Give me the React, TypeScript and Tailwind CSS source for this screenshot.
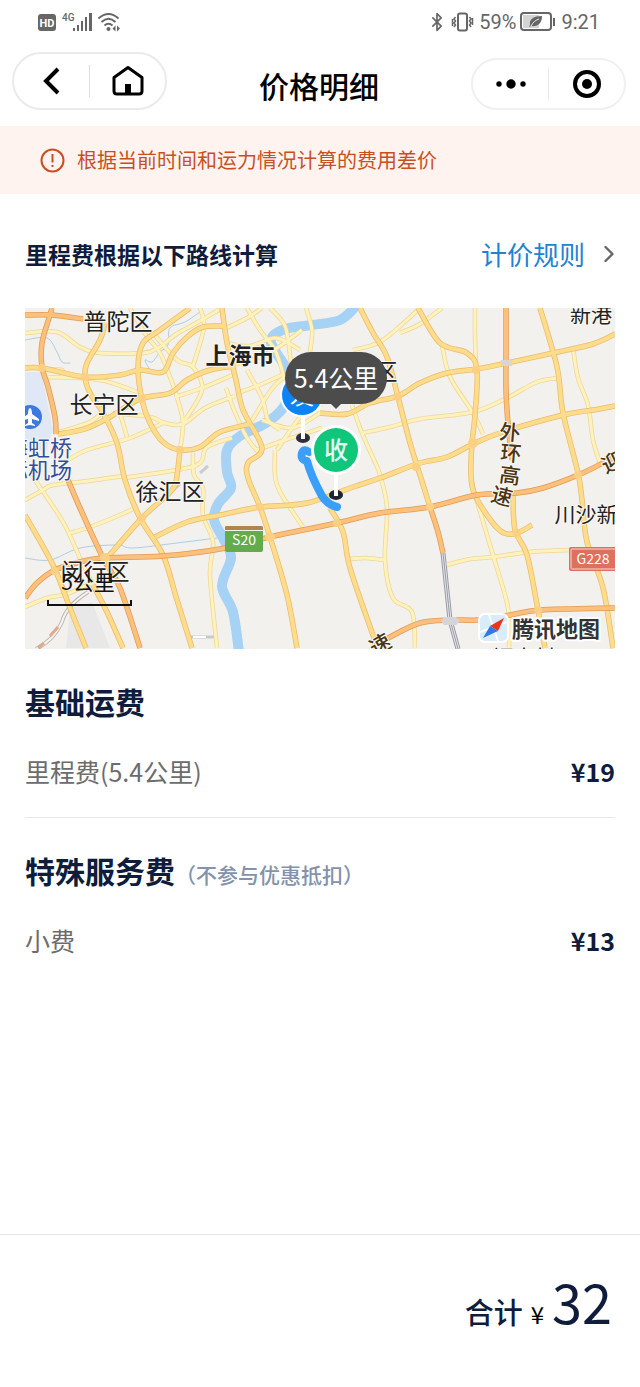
import React from "react";
import { Bluetooth, ChevronRight } from "lucide-react";

type RoadKind = "minor" | "major" | "highway";

interface IRoad {
  kind: RoadKind;
  points: number[][];
}

interface IFee {
  name: string;
  price: number;
}

interface ILabel {
  text: string;
  x: number;
  y: number;
  size: number;
  color: string;
  rotate?: number;
  weight?: number;
}

const roadStyle = {
  minor: { line: "#fff2bd", edge: "#efd694", width: 3 },
  major: { line: "#fddc8b", edge: "#ebbb6a", width: 4 },
  highway: { line: "#fbc07c", edge: "#e39a50", width: 4 },
};

const roads: IRoad[] = [
  { kind: "minor", points: [[25, 333], [57, 332], [80, 347], [100, 353], [143, 353], [160, 347], [175, 335], [198, 322], [222, 308]] },
  { kind: "minor", points: [[130, 308], [146, 335], [160, 353], [170, 377], [177, 397], [183, 423], [180, 450]] },
  { kind: "minor", points: [[153, 333], [177, 360], [193, 367], [202, 390], [183, 423]] },
  { kind: "minor", points: [[48, 377], [100, 380], [140, 393]] },
  { kind: "minor", points: [[48, 370], [62, 370], [62, 378]] },
  { kind: "minor", points: [[113, 413], [150, 417], [165, 423], [183, 424], [205, 408], [235, 396]] },
  { kind: "minor", points: [[63, 463], [87, 450], [130, 438], [163, 423]] },
  { kind: "minor", points: [[120, 413], [127, 437]] },
  { kind: "minor", points: [[56, 433], [90, 422], [104, 410]] },
  { kind: "minor", points: [[123, 478], [177, 470], [200, 463], [207, 447], [232, 438]] },
  { kind: "minor", points: [[193, 453], [194, 475], [203, 488], [203, 515], [213, 542], [210, 575], [217, 648]] },
  { kind: "minor", points: [[175, 397], [202, 388], [235, 374]] },
  { kind: "minor", points: [[25, 500], [43, 490], [53, 485], [88, 481], [123, 476]] },
  { kind: "minor", points: [[30, 473], [37, 483], [63, 522], [80, 558], [93, 585]] },
  { kind: "minor", points: [[70, 533], [90, 527], [120, 515], [137, 507]] },
  { kind: "minor", points: [[25, 607], [47, 598], [67, 594], [93, 582]] },
  { kind: "minor", points: [[200, 308], [204, 327], [193, 366]] },
  { kind: "minor", points: [[222, 330], [247, 318], [262, 308]] },
  { kind: "minor", points: [[247, 308], [260, 330], [275, 350], [284, 377]] },
  { kind: "minor", points: [[270, 308], [285, 326], [290, 355], [292, 372]] },
  { kind: "minor", points: [[306, 308], [312, 330], [310, 352]] },
  { kind: "minor", points: [[227, 343], [250, 346], [276, 338], [300, 350]] },
  { kind: "minor", points: [[225, 366], [252, 360], [274, 350], [302, 330]] },
  { kind: "minor", points: [[240, 392], [262, 384], [284, 374]] },
  { kind: "minor", points: [[247, 370], [262, 398], [268, 420], [280, 430]] },
  { kind: "minor", points: [[250, 424], [262, 404], [276, 384], [300, 366]] },
  { kind: "minor", points: [[258, 452], [246, 436], [234, 410], [226, 388]] },
  { kind: "minor", points: [[277, 450], [292, 428], [308, 408], [322, 404]] },
  { kind: "minor", points: [[257, 450], [285, 440], [322, 428]] },
  { kind: "minor", points: [[262, 420], [292, 428], [320, 413]] },
  { kind: "minor", points: [[420, 308], [398, 328], [378, 343], [353, 350]] },
  { kind: "minor", points: [[352, 405], [362, 433], [374, 460], [380, 475], [387, 508], [385, 560], [393, 598], [412, 612], [415, 648]] },
  { kind: "minor", points: [[362, 433], [390, 427], [420, 419], [473, 412], [507, 398], [537, 382], [558, 378]] },
  { kind: "minor", points: [[275, 450], [275, 475], [280, 492], [303, 527]] },
  { kind: "minor", points: [[350, 559], [366, 558], [385, 560]] },
  { kind: "minor", points: [[475, 308], [475, 335], [476, 367]] },
  { kind: "minor", points: [[442, 308], [420, 324], [400, 333]] },
  { kind: "minor", points: [[442, 345], [450, 377], [473, 413], [483, 434]] },
  { kind: "minor", points: [[475, 495], [493, 555], [508, 608], [509, 648]] },
  { kind: "minor", points: [[447, 565], [470, 559], [493, 557], [530, 552], [569, 550]] },
  { kind: "minor", points: [[573, 348], [578, 378], [588, 405], [593, 440], [600, 463]] },
  { kind: "major", points: [[25, 368], [42, 368], [85, 377], [120, 375], [140, 370], [163, 372], [173, 353], [187, 337], [203, 327], [225, 326]] },
  { kind: "major", points: [[58, 434], [85, 429], [110, 417], [140, 399], [170, 393], [187, 380], [210, 370], [236, 366]] },
  { kind: "major", points: [[190, 308], [160, 330], [143, 343], [138, 367], [142, 400], [150, 423], [163, 442], [180, 450], [200, 447], [220, 432], [250, 424]] },
  { kind: "major", points: [[105, 323], [100, 340], [87, 363], [85, 377], [90, 393], [103, 413], [117, 443], [125, 480], [140, 518], [163, 555], [177, 600], [192, 648]] },
  { kind: "major", points: [[180, 450], [177, 475], [172, 490], [142, 518], [107, 558]] },
  { kind: "major", points: [[25, 515], [53, 565], [70, 608], [86, 648]] },
  { kind: "major", points: [[93, 585], [107, 612], [123, 648]] },
  { kind: "major", points: [[155, 537], [187, 522], [220, 515], [260, 507], [307, 503], [353, 487], [380, 478], [420, 463], [447, 457], [475, 443], [503, 432], [563, 415], [593, 410], [615, 406]] },
  { kind: "major", points: [[222, 308], [227, 343], [236, 380], [243, 410], [262, 448], [248, 463], [248, 478], [260, 507], [270, 537], [287, 595], [297, 648]] },
  { kind: "major", points: [[360, 308], [373, 333], [387, 357], [398, 397], [410, 443], [420, 475], [430, 507]] },
  { kind: "major", points: [[320, 413], [347, 414], [370, 403], [398, 396], [420, 383], [447, 373], [477, 369], [507, 363], [553, 353], [593, 344], [615, 334]] },
  { kind: "major", points: [[418, 308], [440, 343], [467, 353], [477, 370], [475, 415], [472, 443], [471, 475], [475, 495], [492, 522], [504, 533], [517, 533], [532, 525]] },
  { kind: "major", points: [[540, 308], [557, 367], [563, 413], [578, 473], [582, 500], [587, 542], [603, 588], [613, 648]] },
  { kind: "major", points: [[330, 508], [343, 532], [350, 568], [373, 635], [378, 648]] },
  { kind: "major", points: [[513, 495], [515, 530], [527, 555], [538, 610], [545, 648]] },
  { kind: "highway", points: [[25, 315], [52, 315], [83, 319]] },
  { kind: "highway", points: [[52, 308], [49, 318], [42, 343], [42, 367], [48, 387], [55, 417], [56, 434]] },
  { kind: "highway", points: [[68, 480], [80, 508], [103, 558], [120, 588], [140, 648]] },
  { kind: "highway", points: [[25, 598], [37, 583], [55, 570], [80, 562], [103, 558], [163, 556], [220, 549], [270, 537], [337, 523], [380, 513], [430, 507], [477, 495], [517, 493], [543, 488], [578, 475], [603, 463], [615, 457]] },
  { kind: "highway", points: [[430, 507], [438, 532], [443, 553]] },
  { kind: "highway", points: [[506, 308], [506, 350], [506, 390], [508, 423], [512, 460]] },
  { kind: "highway", points: [[372, 648], [390, 637], [420, 623], [450, 620], [477, 620], [510, 615], [540, 610], [615, 608]] },
];

const river = [[356, 306], [340, 320], [312, 325], [285, 329], [271, 339], [276, 352], [288, 372], [290, 390], [283, 408], [266, 423], [240, 436], [227, 450], [227, 472], [231, 488], [218, 504], [214, 520], [224, 540], [231, 558], [222, 586], [233, 612], [239, 652]];

const streams = [
  [[25, 340], [47, 338], [57, 352], [62, 362], [70, 363]],
  [[200, 312], [185, 322], [170, 328], [168, 345], [160, 352], [152, 362], [145, 360], [150, 370]],
  [[25, 558], [50, 560], [80, 548], [117, 545], [133, 548], [177, 543], [217, 538]],
];

const labels: ILabel[] = [
  { text: "普陀区", x: 118, y: 330, size: 23, color: "#222222" },
  { text: "上海市", x: 240, y: 364, size: 23, color: "#222222", weight: 700 },
  { text: "区", x: 386, y: 380, size: 23, color: "#222222" },
  { text: "长宁区", x: 104, y: 413, size: 23, color: "#222222" },
  { text: "徐汇区", x: 170, y: 500, size: 23, color: "#222222" },
  { text: "闵行区", x: 95, y: 580, size: 23, color: "#222222" },
  { text: "新港", x: 591, y: 322, size: 21, color: "#222222" },
  { text: "川沙新", x: 586, y: 522, size: 21, color: "#222222" },
  { text: "海虹桥", x: 39, y: 456, size: 22, color: "#2f4f9a" },
  { text: "际机场", x: 39, y: 478, size: 22, color: "#2f4f9a" },
  { text: "外", x: 510, y: 440, size: 21, color: "#4b3512", rotate: 5, weight: 500 },
  { text: "环", x: 511, y: 461, size: 21, color: "#4b3512", rotate: 5, weight: 500 },
  { text: "高", x: 510, y: 483, size: 21, color: "#4b3512", rotate: 8, weight: 500 },
  { text: "速", x: 502, y: 504, size: 21, color: "#4b3512", rotate: 15, weight: 500 },
  { text: "迎", x: 612, y: 470, size: 21, color: "#4b3512", rotate: -25, weight: 500 },
  { text: "速", x: 380, y: 652, size: 21, color: "#4b3512", rotate: -30, weight: 500 },
  { text: "福古村", x: 524, y: 665, size: 21, color: "#222222" },
];

const baseFees: IFee[] = [{ name: "里程费(5.4公里)", price: 19 }];
const serviceFees: IFee[] = [{ name: "小费", price: 13 }];

// curve that goes through every point, so that the roads still meet at their junctions
const toPath = (points: number[][]): string => {
  let d = `M${points[0][0]} ${points[0][1]}`;
  for (let i = 0; i < points.length - 1; i++) {
    const p0 = points[i - 1] || points[i];
    const p1 = points[i];
    const p2 = points[i + 1];
    const p3 = points[i + 2] || p2;
    d += `C${p1[0] + (p2[0] - p0[0]) / 6} ${p1[1] + (p2[1] - p0[1]) / 6} ${p2[0] - (p3[0] - p1[0]) / 6} ${p2[1] - (p3[1] - p1[1]) / 6} ${p2[0]} ${p2[1]}`;
  }
  return d;
};

const StatusBar = () => {
  return (
    <div className="flex h-11 items-center justify-between pl-9 pr-10 text-[#666666]">
      <svg width="86" height="22" viewBox="36 11 86 22" fill="currentColor">
        <rect x="38" y="14" width="18" height="17" rx="3" />
        <text x="47" y="27" fontSize="11" fontWeight="700" fill="#fff" textAnchor="middle" fontFamily="Roboto">HD</text>
        <text x="62" y="21" fontSize="10" fontWeight="500" fontFamily="Roboto">4G</text>
        <rect x="73" y="28" width="2" height="3" />
        <rect x="77" y="25" width="2" height="6" />
        <rect x="81" y="21" width="2" height="10" />
        <rect x="85" y="17" width="2" height="14" />
        <rect x="89" y="13" width="3" height="18" />
        <g fill="none" stroke="currentColor" strokeWidth="2">
          <path d="M98.500 18.500 Q108.500 9.500 118.500 18.500" />
          <path d="M101.500 22 Q108.500 15.500 115.500 22" />
          <path d="M104.500 25.500 Q108.500 22 112.500 25.500" />
        </g>
        <circle cx="108.500" cy="29" r="2" />
        <path d="M115.500 25.500v6l-3-3zM117 25.500v6l3-3z" />
      </svg>
      <div className="flex items-center gap-1 font-[Roboto] text-xl">
        <Bluetooth size={20} strokeWidth={2} />
        <svg width="24" height="20" viewBox="0 0 24 20" fill="none" stroke="currentColor" strokeWidth="2">
          <rect x="7" y="1.500" width="9" height="17" rx="2" />
          <path strokeWidth="1.500" d="M4.500 5l-1.500 2 1.500 2-1.500 2 1.500 2-1.500 2M1.500 7v7M18.500 5l1.500 2-1.500 2 1.500 2-1.500 2 1.500 2M21.500 6v7" />
        </svg>
        <span>59%</span>
        <svg width="37" height="20" viewBox="0 0 37 20" fill="none">
          <rect x="1" y="1" width="30" height="17" rx="3" stroke="currentColor" strokeWidth="2" />
          <rect x="3" y="3" width="16" height="13" fill="#d4d4d4" />
          <path d="M22 4c-8 0-13 3-12 9l-1 2 2-1c7 1 11-3 11-10z" fill="currentColor" />
          <path d="M11 14c2-4 5-6 8-7" stroke="#eeeeee" />
          <rect x="33" y="6" width="2" height="8" fill="currentColor" />
        </svg>
        <span>9:21</span>
      </div>
    </div>
  );
};

const NavBar = () => {
  return (
    <header className="grid grid-cols-[1fr_auto_1fr] items-center pb-4 pl-3 pr-3.5 pt-2 text-black">
      <div className="flex h-[58px] w-[155px] items-center rounded-full border-2 border-[#ebebeb]">
        <button type="button" aria-label="返回" className="flex flex-1 justify-center">
          <svg width="28" height="32" viewBox="0 0 28 32" fill="none" stroke="currentColor" strokeWidth="4">
            <path d="M20 4L8 16L20 28" />
          </svg>
        </button>
        <div className="h-8 w-px bg-[#dddddd]" />
        <button type="button" aria-label="首页" className="flex flex-1 justify-center">
          <svg width="36" height="32" viewBox="0 0 36 32">
            <path d="M4 12.500L18 2.500L32 12.500V26Q32 29 29 29H7Q4 29 4 26Z" fill="none" stroke="currentColor" strokeWidth="3" strokeLinejoin="round" />
            <rect x="15" y="19" width="6" height="9" fill="currentColor" />
          </svg>
        </button>
      </div>
      <h1 className="mt-2 text-[30px] font-medium leading-10">价格明细</h1>
      <div className="flex h-[52px] w-[155px] items-center self-end justify-self-end rounded-full border-2 border-[#f0f0f0]">
        <button type="button" aria-label="更多" className="flex flex-1 justify-center">
          <svg width="32" height="12" viewBox="0 0 32 12" fill="currentColor">
            <circle cx="4" cy="6" r="2.700" />
            <circle cx="16" cy="6" r="4.700" />
            <circle cx="28" cy="6" r="2.700" />
          </svg>
        </button>
        <div className="h-8 w-px bg-[#e8e8e8]" />
        <button type="button" aria-label="关闭" className="flex flex-1 justify-center">
          <svg width="28" height="28" viewBox="0 0 28 28">
            <circle cx="14" cy="14" r="12" fill="none" stroke="currentColor" strokeWidth="4" />
            <circle cx="14" cy="14" r="5" fill="currentColor" />
          </svg>
        </button>
      </div>
    </header>
  );
};

const RouteMap = () => {
  return (
    <svg viewBox="25 308 590 341" role="img" aria-label="路线地图" className="block w-full">
      <rect x="25" y="308" width="590" height="341" fill="#f2f1ee" />
      <path d="M25 372L41 372L53 430L46 450L25 452Z" fill="#dfe8f4" />
      <path d="M70 608L92 602L110 648H66Z" fill="#e8e8e8" />

      {/* water */}
      <g fill="none" strokeLinecap="round">
        {streams.map((points, i) => (
          <path key={i} d={toPath(points)} stroke="#a9cfe8" strokeWidth="1" />
        ))}
        <path d={toPath(river)} stroke="#a6d2f5" strokeWidth="10" />
      </g>

      {/* railways */}
      <g fill="none">
        <path d="M443 553Q447 590 450 620L458 649" stroke="#9a9aa6" strokeWidth="5" />
        <path d="M443 553Q447 590 450 620L458 649" stroke="#e4e4ea" strokeWidth="3" />
        <path d="M443 553Q447 590 450 620L458 649" stroke="#9a9aa6" strokeWidth="1" />
        <path d="M88 592Q66 606 62 622Q54 640 36 649" stroke="#bdb7b2" strokeWidth="4" />
        <path d="M88 592Q66 606 62 622Q54 640 36 649" stroke="#f7f4f1" strokeWidth="2" />
        <path d="M58 627L50 636M44 643L38 648" stroke="#e2a98d" strokeWidth="3" />
        <path d="M190 637H214" stroke="#c9c9c9" strokeWidth="3" />
        <path d="M193 637H206" stroke="#ffffff" strokeWidth="2" />
        <path d="M158 503L180 484M200 473L208 466" stroke="#cccccc" strokeWidth="3" />
      </g>

      <g fill="none" strokeLinejoin="round">
        {(["minor", "major", "highway"] as RoadKind[]).map((kind) => (
          <g key={kind}>
            {roads.filter((road) => road.kind === kind).map((road, i) => (
              <path key={i} d={toPath(road.points)} stroke={roadStyle[kind].edge} strokeWidth={roadStyle[kind].width + 1.5} />
            ))}
            {roads.filter((road) => road.kind === kind).map((road, i) => (
              <path key={i} d={toPath(road.points)} stroke={roadStyle[kind].line} strokeWidth={roadStyle[kind].width} />
            ))}
          </g>
        ))}
      </g>
      <g fill="#fbd083">
        <circle cx="42" cy="368" r="4" />
        <circle cx="85" cy="377" r="4" />
        <circle cx="142" cy="399" r="4" />
        <circle cx="180" cy="450" r="4" />
        <circle cx="105" cy="558" r="5" />
        <circle cx="142" cy="518" r="4" />
        <circle cx="55" cy="571" r="4" />
        <circle cx="260" cy="507" r="4" />
        <circle cx="270" cy="537" r="5" />
        <circle cx="337" cy="523" r="4" />
        <circle cx="398" cy="397" r="4" />
        <circle cx="416" cy="467" r="4" />
        <circle cx="430" cy="507" r="4" />
        <circle cx="476" cy="370" r="4" />
        <circle cx="473" cy="443" r="5" />
        <circle cx="517" cy="533" r="4" />
        <circle cx="538" cy="610" r="4" />
        <circle cx="578" cy="475" r="4" />
      </g>
      <path d="M444 617h12l4 4-4 4h-12l-3-4z" fill="#d5d5d8" />
      <path d="M501 360h11v6h-11z" fill="#d9d5d0" />

      {/* airport */}
      <circle cx="30" cy="417" r="12" fill="#3d79df" />
      <path d="M30 408c1 0 2 2 2 6l7 5v2l-7-2v4l3 2v1l-5-1-5 1v-1l3-2v-4l-7 2v-2l7-5c0-4 1-6 2-6z" fill="#ffffff" />

      {labels.map((label, i) => (
        <text
          key={i}
          x={label.x}
          y={label.y}
          textAnchor="middle"
          fontSize={label.size}
          fontWeight={label.weight || 400}
          fill={label.color}
          stroke="#faf8f2"
          strokeWidth="2"
          strokeLinejoin="round"
          paintOrder="stroke"
          transform={label.rotate ? `rotate(${label.rotate} ${label.x} ${label.y - 8})` : undefined}
        >
          {label.text}
        </text>
      ))}

      {/* road shields */}
      <rect x="225" y="526" width="38" height="26" rx="2" fill="#64ab4b" />
      <path d="M225 530v-2q0-2 2-2h34q2 0 2 2v2z" fill="#b08550" />
      <path d="M225 530.500h38" stroke="#eef5e6" />
      <text x="244" y="545" fontSize="14" fill="#ffffff" textAnchor="middle">S20</text>
      <rect x="569" y="547" width="49" height="24" rx="2" fill="#e0705e" />
      <rect x="571" y="549" width="50" height="20" rx="1" fill="none" stroke="#f6d9d2" />
      <text x="593" y="564" fontSize="14" fill="#ffffff" textAnchor="middle">G228</text>

      {/* scale */}
      <text x="88" y="590" fontSize="21" fill="#111111" textAnchor="middle">5公里</text>
      <path d="M48 600v5h83v-5" fill="none" stroke="#111111" strokeWidth="2" />

      {/* route */}
      <path d="M309 452Q304 448 302 453Q300 460 307 461Q311 476 322 496Q328 505 337 507" fill="none" stroke="#3a9ffb" strokeWidth="8" strokeLinecap="round" strokeLinejoin="round" />

      {/* start pin */}
      <ellipse cx="303" cy="438" rx="7" ry="5" fill="#2c2f3c" />
      <path d="M303 412V439" stroke="#ffffff" strokeWidth="4" />
      <circle cx="302" cy="395" r="22" fill="#ffffff" />
      <circle cx="302" cy="395" r="20" fill="#0d84f5" />
      <text x="302" y="404" fontSize="24" fill="#ffffff" textAnchor="middle">发</text>

      {/* end pin */}
      <ellipse cx="336" cy="495" rx="7" ry="5" fill="#1f2330" />
      <path d="M336 470V496" stroke="#ffffff" strokeWidth="4" />
      <circle cx="336" cy="450" r="25" fill="#ffffff" />
      <circle cx="336" cy="450" r="22" fill="#10c67b" />
      <text x="336" y="459" fontSize="24" fontWeight="500" fill="#e9fbf2" textAnchor="middle">收</text>

      <path d="M330 403h12l-6 6z" fill="#4c4c4c" />
      <rect x="285" y="352" width="102" height="52" rx="26" fill="#4c4c4c" />
      <text x="336" y="388" fontSize="25" fill="#ffffff" textAnchor="middle">5.4公里</text>

      {/* map provider */}
      <rect x="478" y="613" width="31" height="30" rx="7" fill="#ffffff" />
      <rect x="480" y="615" width="27" height="26" rx="5" fill="#d9ecfa" />
      <path d="M480 632L507 622M489 615L498 641" stroke="#ffffff" strokeWidth="2" />
      <path d="M504 618L498 631L490 626Z" fill="#e8351f" />
      <path d="M483 638L498 631L490 626Z" fill="#2e7be6" />
      <text x="556" y="637" fontSize="22" fontWeight="700" fill="#333333" stroke="#ffffff" strokeWidth="4" strokeLinejoin="round" paintOrder="stroke" textAnchor="middle">腾讯地图</text>
    </svg>
  );
};

const FeeRows = ({ fees }: { fees: IFee[] }) => {
  return (
    <dl className="mt-8 grid gap-4 text-[25px] leading-9">
      {fees.map((fee) => (
        <div key={fee.name} className="flex items-center justify-between">
          <dt className="text-[#6c6c6c]">{fee.name}</dt>
          <dd className="font-bold">¥{fee.price}</dd>
        </div>
      ))}
    </dl>
  );
};

const App = () => {
  const total = [...baseFees, ...serviceFees].reduce((sum, fee) => sum + fee.price, 0);

  return (
    <div className="flex min-h-screen w-full flex-col bg-white font-['Noto_Sans_CJK_SC',sans-serif] text-[#0f1c3c]">
      <StatusBar />
      <NavBar />

      <div className="flex items-center gap-3 bg-[#fff3ef] px-10 py-4 text-[#c8501e]">
        <svg width="25" height="25" viewBox="0 0 25 25" fill="none" stroke="currentColor" strokeWidth="2">
          <circle cx="12.500" cy="12.500" r="11" />
          <path d="M12.500 6v8.500M12.500 17v2" />
        </svg>
        <p className="text-xl leading-9">根据当前时间和运力情况计算的费用差价</p>
      </div>

      <main className="flex-1 px-[25px]">
        <div className="flex items-center justify-between pb-[34px] pt-10">
          <h2 className="text-[23px] font-bold leading-10">里程费根据以下路线计算</h2>
          <a href="#rules" className="flex items-center gap-2.5 text-[26px] leading-10 text-[#1f82d2]">
            计价规则
            <ChevronRight size={28} strokeWidth={2} className="-mr-2 text-[#666666]" />
          </a>
        </div>

        <RouteMap />

        <section className="border-b border-[#e8e8e8] pb-7 pt-8">
          <h2 className="text-[30px] font-bold leading-10">基础运费</h2>
          <FeeRows fees={baseFees} />
        </section>

        <section className="pb-7 pt-8">
          <h2 className="flex items-baseline text-[30px] font-bold leading-10">
            特殊服务费
            <span className="text-[21px] font-medium leading-8 text-[#8592ab]">（不参与优惠抵扣）</span>
          </h2>
          <FeeRows fees={serviceFees} />
        </section>
      </main>

      <footer className="flex h-[153px] items-baseline justify-end gap-2 border-t border-[#e8e8e8] px-7 pt-[30px]">
        <span className="text-[29px] font-medium">合计</span>
        <span className="text-2xl text-black">¥</span>
        <span className="text-[54px] leading-[72px]">{total}</span>
      </footer>
    </div>
  );
};

export default App;
